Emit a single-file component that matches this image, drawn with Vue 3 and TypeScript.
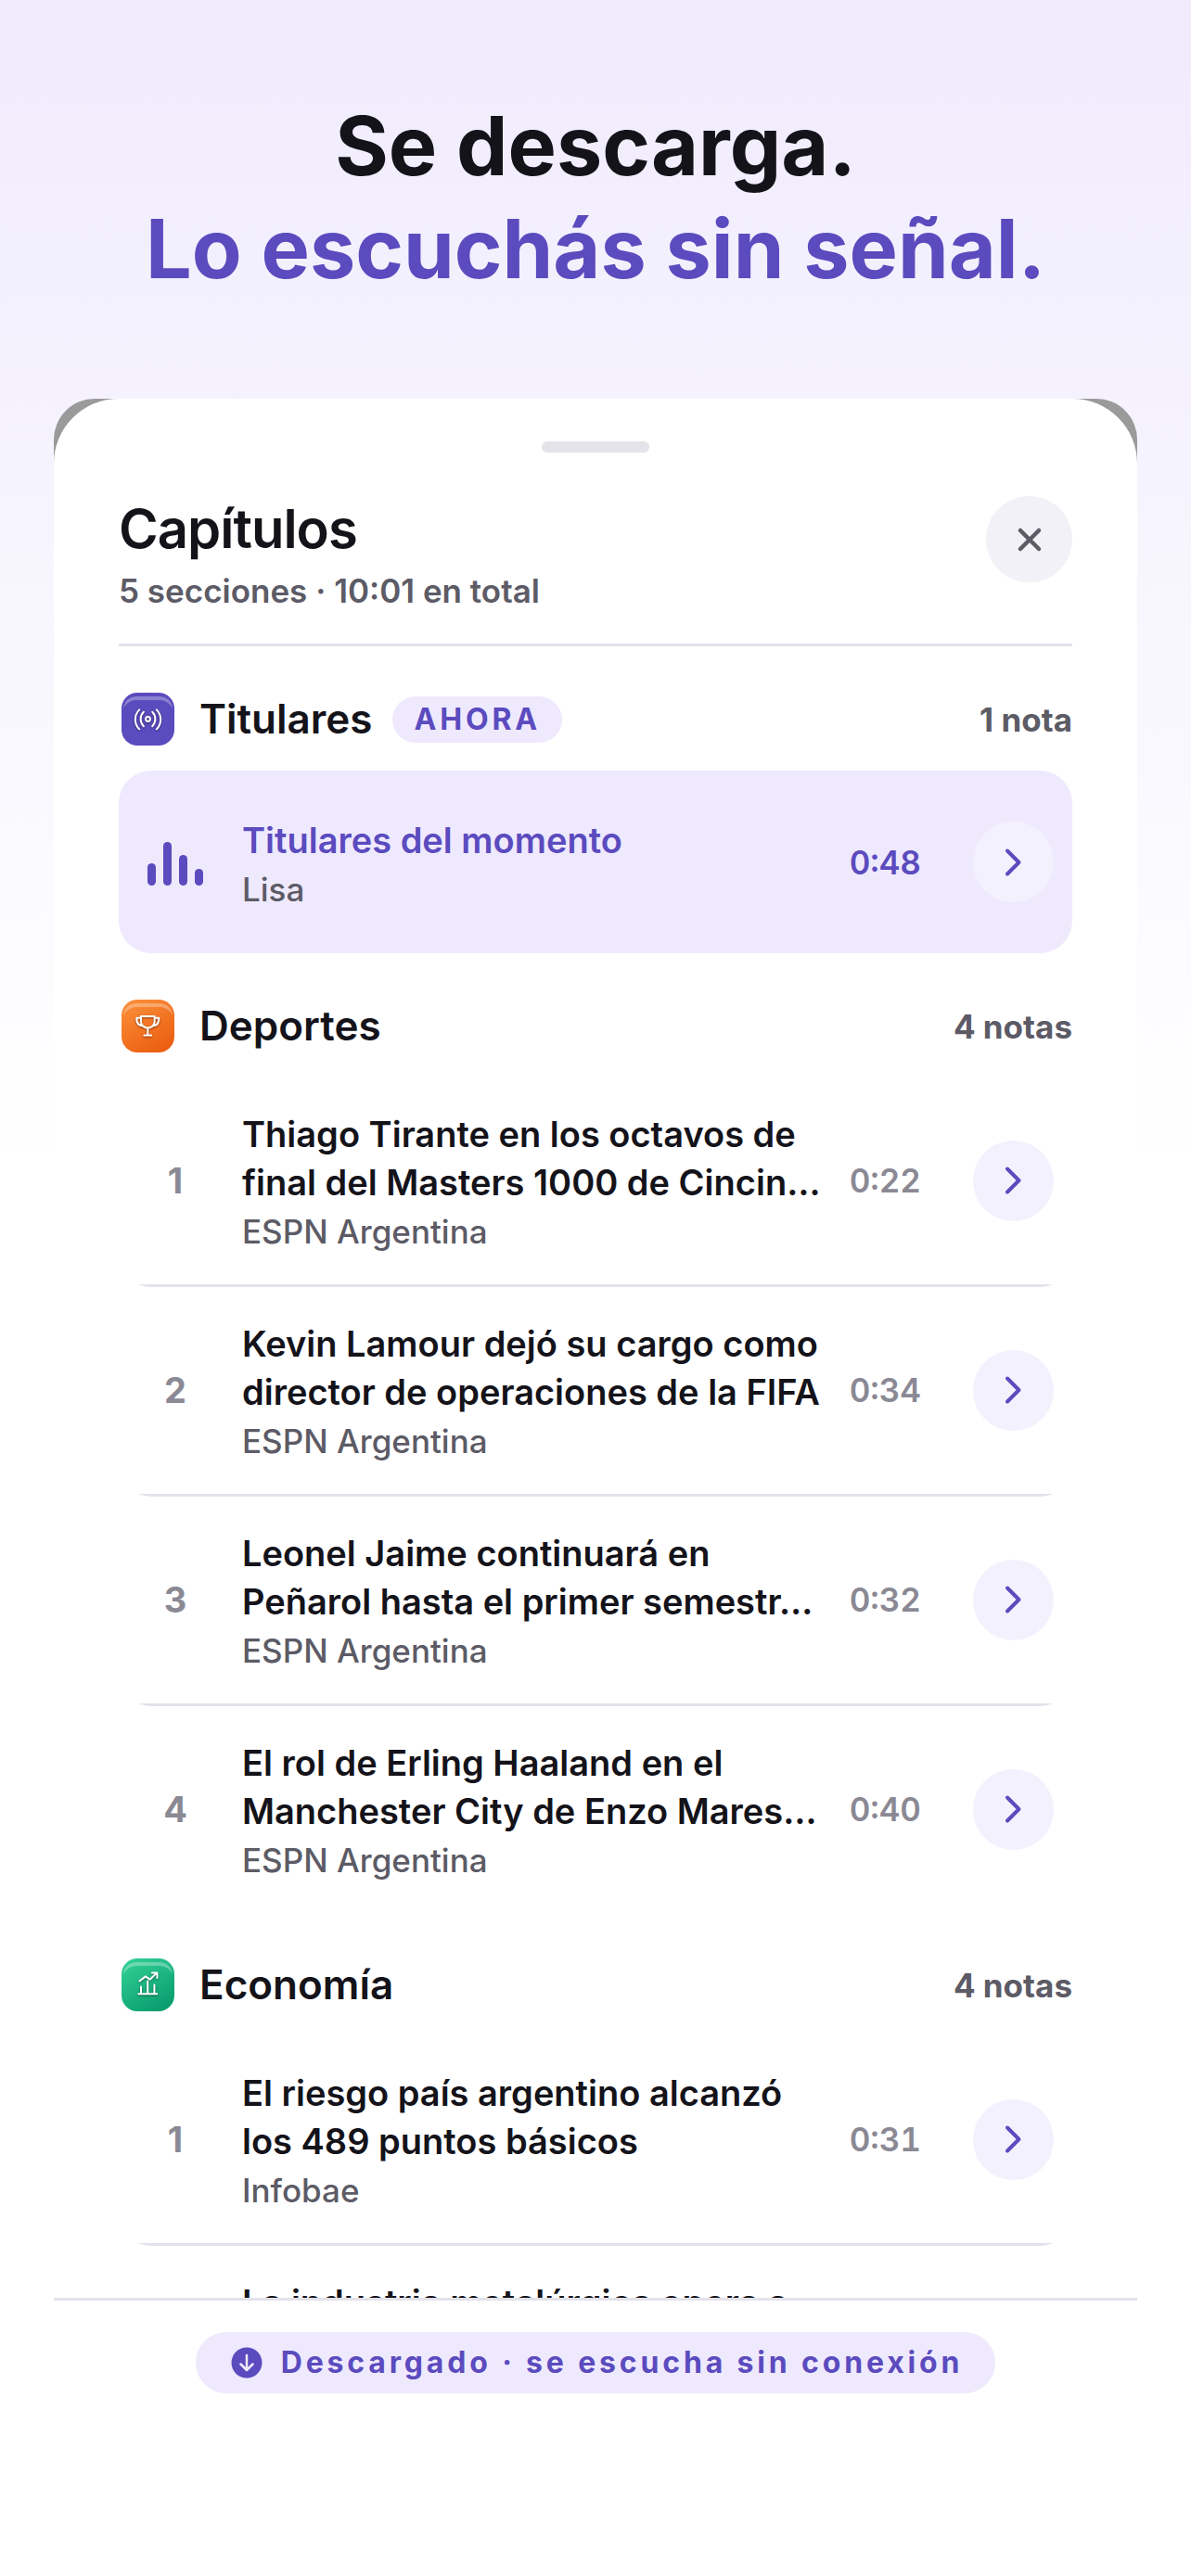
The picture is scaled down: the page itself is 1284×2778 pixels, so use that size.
<script setup lang="ts">
interface Story {
  title: string
  source?: string
  time?: string
}

interface Section {
  name: string
  icon: 'live' | 'sports' | 'economy'
  count: string
  live?: boolean
  stories: Story[]
}

const sections: Section[] = [
  {
    name: 'Titulares',
    icon: 'live',
    count: '1 nota',
    live: true,
    stories: [{ title: 'Titulares del momento', source: 'Lisa', time: '0:48' }],
  },
  {
    name: 'Deportes',
    icon: 'sports',
    count: '4 notas',
    stories: [
      { title: 'Thiago Tirante en los octavos de\nfinal del Masters 1000 de Cincin…', source: 'ESPN Argentina', time: '0:22' },
      { title: 'Kevin Lamour dejó su cargo como\ndirector de operaciones de la FIFA', source: 'ESPN Argentina', time: '0:34' },
      { title: 'Leonel Jaime continuará en\nPeñarol hasta el primer semestr…', source: 'ESPN Argentina', time: '0:32' },
      { title: 'El rol de Erling Haaland en el\nManchester City de Enzo Mares…', source: 'ESPN Argentina', time: '0:40' },
    ],
  },
  {
    name: 'Economía',
    icon: 'economy',
    count: '4 notas',
    stories: [
      { title: 'El riesgo país argentino alcanzó\nlos 489 puntos básicos', source: 'Infobae', time: '0:31' },
      { title: 'La industria metalúrgica opera a' },
    ],
  },
]

const bars = [24, 47, 33, 18]
</script>

<template>
  <main class="page">
    <h1 class="headline">
      <span>Se descarga.</span>
      <span class="accent">Lo escuchás sin señal.</span>
    </h1>

    <div class="device">
      <section class="sheet" aria-labelledby="sheet-title">
        <div class="handle"></div>

        <header class="sheet-head">
          <div>
            <h2 id="sheet-title" class="title">Capítulos</h2>
            <p class="subtitle">5 secciones · 10:01 en total</p>
          </div>
          <button class="close" type="button" aria-label="Cerrar">
            <svg width="30" height="30" viewBox="0 0 30 30" fill="none" stroke="currentColor" stroke-width="4.5" stroke-linecap="round">
              <path d="M5 5 25 25M25 5 5 25" />
            </svg>
          </button>
        </header>

        <div class="list">
          <section v-for="section in sections" :key="section.name" class="group">
            <div class="group-head">
              <svg class="tile" :class="section.icon" viewBox="0 0 57 57" fill="none" stroke-linecap="round" stroke-linejoin="round" aria-hidden="true">
                <path d="M2 17C3 9 8 4 17 4H40C49 4 54 9 55 17C51 10 46 8 40 8H17C11 8 6 10 2 17Z" fill="#fff" fill-opacity=".3" />
                <g class="glyph" stroke="#fff" stroke-width="2">
                  <template v-if="section.icon === 'live'">
                    <circle cx="28.5" cy="28.5" r="2.4" />
                    <path d="M23.8 20.8C19.6 25.2 19.6 31.8 23.8 36.2M33.2 20.8C37.4 25.2 37.4 31.8 33.2 36.2M19.2 18.4C13.4 24.4 13.4 33.6 19.2 39.4M37.8 18.4C43.6 24.4 43.6 33.6 37.8 39.4" />
                  </template>
                  <template v-else-if="section.icon === 'sports'">
                    <path d="M21 18H35.6V23.5C35.6 27.6 32.4 30.6 28.3 30.6S21 27.6 21 23.5ZM28.3 30.6V38.4M24.4 38.6H32.2M21 19.8H16.4C16 24.4 18 27.6 22.4 28.2M35.6 19.8H40.2C40.6 24.4 38.6 27.6 34.2 28.2" />
                  </template>
                  <template v-else>
                    <path d="M18.4 38.2H38.2M21 38V30.6M28.2 38V24.6M35.4 38V28.6M19.4 24.4 26 19.4 30.6 22.8 38 15.6M32.8 15.4H38.4V21" />
                  </template>
                </g>
              </svg>
              <h3 class="group-name">{{ section.name }}</h3>
              <span v-if="section.live" class="badge">AHORA</span>
              <span class="count">{{ section.count }}</span>
            </div>

            <ul class="stories">
              <li v-for="(story, i) in section.stories" :key="story.title" class="story" :class="{ active: section.live }">
                <div class="lead">
                  <div v-if="section.live" class="bars">
                    <i v-for="bar in bars" :key="bar" :style="{ height: bar + 'px' }"></i>
                  </div>
                  <template v-else-if="story.source">{{ i + 1 }}</template>
                </div>
                <div class="text">
                  <p class="story-title">{{ story.title }}</p>
                  <p v-if="story.source" class="source">{{ story.source }}</p>
                </div>
                <template v-if="story.time">
                  <span class="time">{{ story.time }}</span>
                  <button class="go" type="button" :aria-label="'Abrir ' + story.title">
                    <svg width="32" height="32" viewBox="0 0 32 32" fill="none" stroke="currentColor" stroke-width="4" stroke-linecap="round" stroke-linejoin="round">
                      <path d="M9 3.5 21.5 16 9 28.5" />
                    </svg>
                  </button>
                </template>
              </li>
            </ul>
          </section>
        </div>

        <footer class="foot">
          <span class="pill">
            <svg width="34" height="34" viewBox="0 0 34 34" fill="none" aria-hidden="true">
              <circle cx="17" cy="17" r="16.5" fill="#5b4bbe" />
              <path d="M17 9V24M10.5 18.5 17 25 23.5 18.5" stroke="#efe9fe" stroke-width="2.5" stroke-linecap="round" stroke-linejoin="round" />
            </svg>
            Descargado · se escucha sin conexión
          </span>
        </footer>
      </section>
    </div>
  </main>
</template>

<style>
body {
  margin: 0;
}
</style>

<style scoped>
h1,
h2,
h3,
p,
ul {
  margin: 0;
  padding: 0;
}

button {
  border: 0;
  padding: 0;
  display: grid;
  place-items: center;
  flex: none;
  border-radius: 50%;
}

.page {
  box-sizing: border-box;
  height: 100vh;
  display: flex;
  flex-direction: column;
  padding: 102px 58px 0;
  background: linear-gradient(#f0ebfd, #f5f2fe 15%, #ffffff 45%);
  font-family: Inter, 'Liberation Sans', sans-serif;
  color: #14131a;
}

.headline {
  display: flex;
  flex-direction: column;
  align-items: center;
  font-size: 88px;
  line-height: 111px;
  font-weight: 700;
  padding-bottom: 106px;
}

.accent {
  color: #5b4bbe;
}

.device {
  flex: 1;
  min-height: 0;
  display: flex;
  background: #9a9a9a;
  border-radius: 44px 44px 0 0;
  overflow: hidden;
}

.sheet {
  flex: 1;
  min-width: 0;
  display: flex;
  flex-direction: column;
  background: #ffffff;
  border-radius: 70px 70px 0 0;
  padding-top: 46px;
}

.handle {
  flex: none;
  align-self: center;
  width: 116px;
  height: 12px;
  border-radius: 6px;
  background: #e3e3e9;
}

.sheet-head {
  display: flex;
  justify-content: space-between;
  align-items: flex-start;
  margin: 47px 70px 0;
  padding-bottom: 34px;
  border-bottom: 3px solid #e3e2ea;
}

.title {
  font-size: 58px;
  line-height: 70px;
  font-weight: 600;
  letter-spacing: -1px;
}

.subtitle {
  margin-top: 9px;
  font-size: 35px;
  line-height: 46px;
  font-weight: 600;
  color: #5c5b66;
}

.close {
  width: 93px;
  height: 93px;
  background: #f2f1f7;
  color: #5c5b66;
}

.list {
  flex: 1;
  min-height: 0;
  overflow-y: auto;
  scrollbar-width: none;
  padding: 0 70px;
}

.group {
  padding-top: 50px;
}

.group-head {
  display: flex;
  align-items: center;
  height: 57px;
  padding-left: 3px;
  margin-bottom: 27px;
}

.tile {
  flex: none;
  width: 57px;
  height: 57px;
  border-radius: 17px;
}

.tile.live {
  background: #5b4bbe;
}

.tile.sports {
  background: linear-gradient(150deg, #fb923c, #ea580c);
}

.tile.economy {
  background: linear-gradient(150deg, #34d399, #059669);
}

.glyph {
  filter: drop-shadow(0 1px 1px rgba(0, 0, 0, 0.45));
}

.group-name {
  margin-left: 27px;
  font-size: 44px;
  line-height: 57px;
  font-weight: 600;
}

.badge {
  margin-left: 21px;
  padding: 0 23px 0 24px;
  border-radius: 25px;
  background: #efe9fe;
  color: #5b4bbe;
  font-size: 32px;
  line-height: 50px;
  font-weight: 700;
  letter-spacing: 0.12em;
}

.count {
  margin-left: auto;
  font-size: 35px;
  font-weight: 700;
  color: #5c5b66;
}

.stories {
  list-style: none;
}

.story {
  box-sizing: border-box;
  display: flex;
  align-items: center;
  padding: 30px 20px 34px 29px;
  border-radius: 35px;
  background: linear-gradient(#e3e2ea, #e3e2ea) bottom / 100% 3px no-repeat;
}

.story:last-child {
  padding-bottom: 30px;
  background: none;
}

.story.active {
  min-height: 197px;
  background: #efe9fe;
}

.lead {
  width: 64px;
  text-align: center;
  font-size: 38px;
  font-weight: 700;
  color: #8a8994;
}

.bars {
  display: flex;
  justify-content: center;
  align-items: flex-end;
  gap: 8px;
  padding-top: 4px;
}

.bars i {
  width: 9px;
  border-radius: 5px;
  background: #5b4bbe;
}

.text {
  flex: 1;
  min-width: 0;
  margin-left: 40px;
  padding-top: 5px;
}

.story-title {
  font-size: 38px;
  line-height: 52px;
  font-weight: 600;
  white-space: pre-line;
}

.source {
  margin-top: 1px;
  font-size: 35px;
  line-height: 52px;
  font-weight: 500;
  color: #5c5b66;
}

.time {
  font-size: 35px;
  font-weight: 600;
  font-variant-numeric: tabular-nums;
  color: #8a8994;
}

.active .story-title,
.active .time {
  color: #5b4bbe;
}

.go {
  width: 87px;
  height: 87px;
  margin-left: 56px;
  background: #f4f1fe;
  color: #5b4bbe;
}

.foot {
  flex: none;
  display: flex;
  justify-content: center;
  border-top: 3px solid #e3e2ea;
  padding: 34px 0 197px;
}

.pill {
  display: flex;
  align-items: center;
  gap: 20px;
  padding: 0 35px 0 38px;
  border-radius: 33px;
  background: #efe9fe;
  color: #5b4bbe;
  font-size: 32px;
  line-height: 66px;
  font-weight: 700;
  letter-spacing: 0.12em;
  white-space: nowrap;
}
</style>
